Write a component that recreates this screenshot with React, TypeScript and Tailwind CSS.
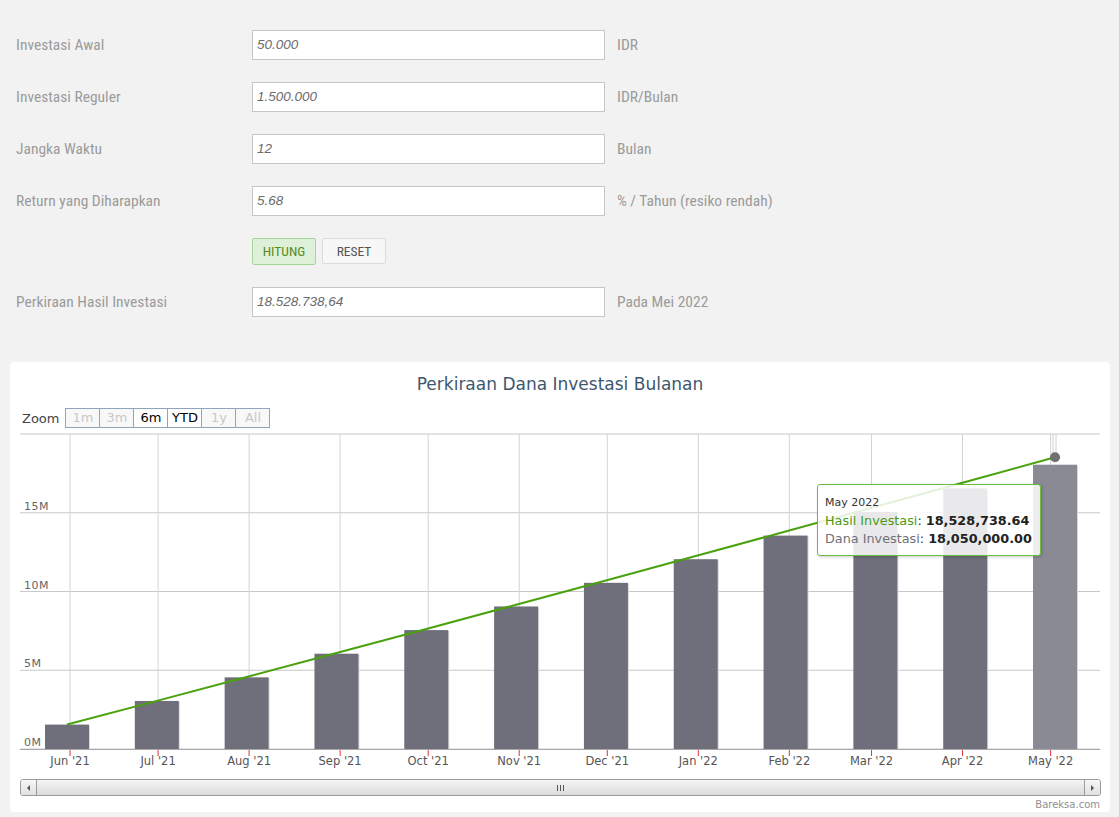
import React from 'react';

const LABEL_FONT = { fontFamily: "'Liberation Sans Narrow', 'Roboto Condensed', Roboto, sans-serif" };
const INPUT_FONT = { fontFamily: "'Liberation Sans', Arial, sans-serif" };
const CHART_FONT = { fontFamily: "'DejaVu Sans', Verdana, sans-serif" };

const FIELDS = [
  { label: 'Investasi Awal', value: '50.000', unit: 'IDR' },
  { label: 'Investasi Reguler', value: '1.500.000', unit: 'IDR/Bulan' },
  { label: 'Jangka Waktu', value: '12', unit: 'Bulan' },
  { label: 'Return yang Diharapkan', value: '5.68', unit: '% / Tahun (resiko rendah)' },
];

const MONTHS = ["Jun '21", "Jul '21", "Aug '21", "Sep '21", "Oct '21", "Nov '21", "Dec '21", "Jan '22", "Feb '22", "Mar '22", "Apr '22", "May '22"];
// days from Jun 1 2021 to the first of each month
const DAYS = [0, 30, 61, 92, 122, 153, 183, 214, 245, 273, 304, 334];

const RATE = 0.0568 / 12;
const dana: number[] = [];
const hasil: number[] = [];
let acc = 50000;
for (let i = 0; i < 12; i++) {
  acc = acc * (1 + RATE) + 1500000;
  hasil.push(acc);
  dana.push(50000 + 1500000 * (i + 1));
}

// svg coords: origin at card x=0, page y=430
const yOf = (v: number) => 319 - (v / 1e6) * 15.75;
const barX = (i: number) => 57 + 89.82 * i;
const tickX = (i: number) => 60 + DAYS[i] * 2.936;

const FormRow: React.FC<{ label: string; value: string; unit: string }> = ({ label, value, unit }) => (
  <div className="flex items-center h-[30px]">
    <div className="w-[236px] text-[15.5px] text-[#9b9b9b] pt-[2px]" style={LABEL_FONT}>{label}</div>
    <div className="w-[353px] h-[30px] bg-white border border-[#c6c6c6] flex items-center pl-[4px]">
      <span className="italic text-[13.5px] text-[#6b6b6b] pt-[1px]" style={INPUT_FONT}>{value}</span>
    </div>
    <div className="ml-[12px] text-[15.5px] text-[#9b9b9b] pt-[2px]" style={LABEL_FONT}>{unit}</div>
  </div>
);

const Chart: React.FC = () => {
  const points = hasil.map((v, i) => `${barX(i)},${yOf(v)}`).join(' ');
  return (
    <svg width={1100} height={340} className="block" style={CHART_FONT}>
      {/* horizontal grid */}
      {[0, 5, 10, 15, 20].map((m) => (
        <line key={m} x1={10} x2={1090} y1={yOf(m * 1e6)} y2={yOf(m * 1e6)} stroke="#c8c8c8" strokeWidth={1} />
      ))}
      {/* vertical grid */}
      {DAYS.map((_, i) => (
        <line key={i} x1={tickX(i)} x2={tickX(i)} y1={4} y2={319} stroke="#d4d4d4" strokeWidth={1} />
      ))}
      {/* y labels */}
      {[0, 5, 10, 15].map((m) => (
        <text key={m} x={14} y={yOf(m * 1e6) - 3} fontSize={11} fill="#666" letterSpacing={0.5}>{m}M</text>
      ))}
      {/* bars */}
      {dana.map((v, i) => {
        const top = yOf(v);
        return (
          <g key={i}>
            <rect x={barX(i) - 21} y={top + 1} width={44} height={319 - top - 1} fill="#dadada" />
            <rect x={barX(i) - 22} y={top} width={44} height={319 - top} fill={i === 11 ? '#8a8a95' : '#6f6f7b'} />
          </g>
        );
      })}
      {/* crosshair */}
      <line x1={1043} x2={1043} y1={4} y2={yOf(hasil[11])} stroke="#d0d0d0" strokeWidth={1} />
      <line x1={1046} x2={1046} y1={4} y2={yOf(hasil[11])} stroke="#d0d0d0" strokeWidth={1} />
      {/* axis */}
      <line x1={10} x2={1090} y1={319.5} y2={319.5} stroke="#a8a8a8" strokeWidth={1} />
      {DAYS.map((_, i) => (
        <line key={i} x1={tickX(i)} x2={tickX(i)} y1={320} y2={326} stroke="#e0303a" strokeWidth={1} />
      ))}
      {MONTHS.map((m, i) => (
        <text key={m} x={tickX(i)} y={335} fontSize={11.5} fill="#555" textAnchor="middle">{m}</text>
      ))}
      {/* line */}
      <polyline points={points} fill="none" stroke="#4aa10e" strokeWidth={2} />
      <circle cx={barX(11)} cy={yOf(hasil[11])} r={5} fill="#707070" />
    </svg>
  );
};

export default function App() {
  const zoomBtns = [
    { t: '1m', on: false },
    { t: '3m', on: false },
    { t: '6m', on: true },
    { t: 'YTD', on: true },
    { t: '1y', on: false },
    { t: 'All', on: false },
  ];
  return (
    <div className="w-[1119px] h-[817px] bg-[#f2f2f2] overflow-hidden">
      <div className="pt-[30px] pl-[16px] flex flex-col gap-[22px]">
        {FIELDS.map((f) => (
          <FormRow key={f.label} {...f} />
        ))}
        <div className="flex items-start h-[27px] pl-[236px] gap-[6px]">
          <div className="w-[64px] h-[27px] bg-[#dff0d8] border border-[#a6d59a] rounded-[2px] flex items-center justify-center text-[13.5px] text-[#55891c]" style={LABEL_FONT}>
            HITUNG
          </div>
          <div className="w-[64px] h-[26px] bg-[#f7f7f7] border border-[#dcdcdc] rounded-[2px] flex items-center justify-center text-[13.5px] text-[#555]" style={LABEL_FONT}>
            RESET
          </div>
        </div>
        <FormRow label="Perkiraan Hasil Investasi" value="18.528.738,64" unit="Pada Mei 2022" />
      </div>

      <div className="mt-[45px] ml-[10px] w-[1100px] h-[450px] bg-white rounded-[4px] relative">
        <div className="h-[44px] pt-[2px] flex items-center justify-center text-[17px] text-[#3e576f]" style={CHART_FONT}>
          Perkiraan Dana Investasi Bulanan
        </div>
        <div className="flex items-center h-[20px] mt-[2px] pl-[12px]" style={CHART_FONT}>
          <span className="text-[13px] text-[#444] mr-[6px] pt-[1px]">Zoom</span>
          <div className="flex">
            {zoomBtns.map((b, i) => (
              <div
                key={b.t}
                className={`h-[20px] w-[35px] border border-[#8fa4bd] flex items-center justify-center text-[13px] ${b.on ? 'text-black bg-white' : 'text-[#c8c8c8] bg-[#f8f8f8]'} ${i > 0 ? '-ml-px' : ''}`}
              >
                {b.t}
              </div>
            ))}
          </div>
        </div>
        <div className="mt-[2px]">
          <Chart />
        </div>
        {/* scrollbar */}
        <div className="ml-[10px] mt-[9px] w-[1081px] h-[17px] border border-[#9a9a9a] rounded-[3px] flex bg-gradient-to-b from-[#f4f4f4] to-[#dcdcdc] overflow-hidden">
          <div className="w-[16px] h-full border-r border-[#9a9a9a] flex items-center justify-center bg-gradient-to-b from-[#f8f8f8] to-[#e0e0e0]">
            <span className="w-0 h-0 border-y-[3px] border-y-transparent border-r-[3px] border-r-[#555]" />
          </div>
          <div className="flex-1 h-full flex items-center justify-center">
            <div className="flex gap-[2px]">
              <span className="w-px h-[6px] bg-[#555]" />
              <span className="w-px h-[6px] bg-[#555]" />
              <span className="w-px h-[6px] bg-[#555]" />
            </div>
          </div>
          <div className="w-[16px] h-full border-l border-[#9a9a9a] flex items-center justify-center bg-gradient-to-b from-[#f8f8f8] to-[#e0e0e0]">
            <span className="w-0 h-0 border-y-[3px] border-y-transparent border-l-[3px] border-l-[#555]" />
          </div>
        </div>
        <div className="pr-[10px] mt-[1px] text-right text-[10px] text-[#909090]" style={CHART_FONT}>
          Bareksa.com
        </div>

        {/* tooltip */}
        <div
          className="absolute left-[807px] top-[122px] w-[224px] h-[72px] border-[1.5px] border-[#6cbf3c] rounded-[3px] bg-white/85 shadow-[1px_1px_3px_rgba(0,0,0,0.2)] px-[7px] pt-[11px]"
          style={CHART_FONT}
        >
          <div className="text-[11px] leading-[14px] text-[#333]">May 2022</div>
          <div className="text-[12.8px] leading-[19px] mt-[1px] whitespace-nowrap">
            <span className="text-[#4a9a12]">Hasil Investasi</span>
            <span className="text-[#333]">: </span>
            <span className="font-bold text-[#222]">18,528,738.64</span>
          </div>
          <div className="text-[12.8px] leading-[18px] whitespace-nowrap">
            <span className="text-[#6f6f7b]">Dana Investasi</span>
            <span className="text-[#333]">: </span>
            <span className="font-bold text-[#222]">18,050,000.00</span>
          </div>
        </div>
      </div>
    </div>
  );
}
